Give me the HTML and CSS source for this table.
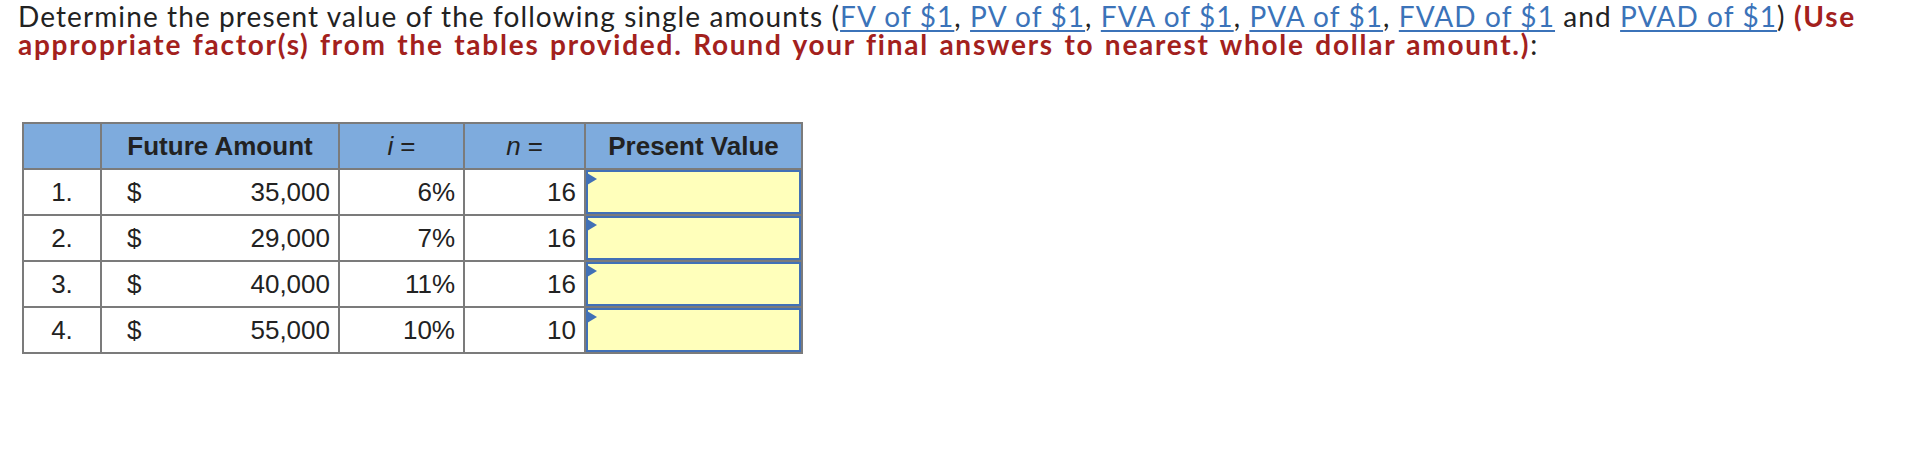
FILE: index.html
```html
<!DOCTYPE html>
<html lang="en">
<head>
<meta charset="utf-8">
<title>Present value</title>
<link rel="stylesheet" href="styles.css">
</head>
<body>
<div class="page">
  <p class="prompt">Determine the present value of the following single amounts (<a href="#">FV of $1</a>, <a href="#">PV of $1</a>, <a href="#">FVA of $1</a>, <a href="#">PVA of $1</a>, <a href="#">FVAD of $1</a> and <a href="#">PVAD of $1</a>) <strong class="note">(Use appropriate factor(s) from the tables provided. Round your final answers to nearest whole dollar amount.)</strong>:</p>

  <div class="grid">
    <div class="cell head"></div>
    <div class="cell head">Future Amount</div>
    <div class="cell head plain"><i>i</i> =</div>
    <div class="cell head plain"><i>n</i> =</div>
    <div class="cell head">Present Value</div>

    <div class="cell num">1.</div>
    <div class="cell amt"><span>$</span><span>35,000</span></div>
    <div class="cell right">6%</div>
    <div class="cell right">16</div>
    <div class="cell entry"><div class="box"></div></div>

    <div class="cell num">2.</div>
    <div class="cell amt"><span>$</span><span>29,000</span></div>
    <div class="cell right">7%</div>
    <div class="cell right">16</div>
    <div class="cell entry"><div class="box"></div></div>

    <div class="cell num">3.</div>
    <div class="cell amt"><span>$</span><span>40,000</span></div>
    <div class="cell right">11%</div>
    <div class="cell right">16</div>
    <div class="cell entry"><div class="box"></div></div>

    <div class="cell num">4.</div>
    <div class="cell amt"><span>$</span><span>55,000</span></div>
    <div class="cell right">10%</div>
    <div class="cell right">10</div>
    <div class="cell entry"><div class="box"></div></div>
  </div>
</div>
</body>
</html>
```

FILE: styles.css
```css
html, body {
  margin: 0;
  padding: 0;
  background: #ffffff;
}

.page {
  padding: 2px 18px 0 18px;
}

.prompt {
  margin: 0;
  font-family: Lato, "Liberation Sans", sans-serif;
  font-size: 28px;
  line-height: 28px;
  letter-spacing: 1.1px;
  color: #222222;
}

.prompt a {
  color: #3b73b9;
  text-decoration: underline;
  text-underline-offset: 3px;
  text-decoration-thickness: 2px;
}

.note {
  color: #a3211d;
  font-weight: 700;
  letter-spacing: 1.75px;
  word-spacing: 2px;
}

.grid {
  display: grid;
  grid-template-columns: 78px 238px 125px 121px 217px;
  grid-auto-rows: 46px;
  width: max-content;
  margin: 64px 0 0 4px;
  border-left: 2px solid #7b7b7b;
  border-top: 2px solid #7b7b7b;
  font-family: "Liberation Sans", Arial, sans-serif;
  font-size: 26px;
  color: #222222;
}

.cell {
  border-right: 2px solid #7b7b7b;
  border-bottom: 2px solid #7b7b7b;
  display: flex;
  align-items: center;
  box-sizing: border-box;
}

.head {
  background: #7eabdd;
  font-weight: 700;
  justify-content: center;
}

.head.plain {
  font-weight: 400;
}

.head i {
  margin-right: 7px;
}

.num {
  justify-content: center;
}

.amt {
  justify-content: space-between;
  padding: 0 8px 0 25px;
}

.right {
  justify-content: flex-end;
  padding-right: 8px;
}

.entry {
  align-items: stretch;
}

.box {
  position: relative;
  flex: 1;
  background: #ffffbb;
  border: 2px solid #4170b6;
}

.box::before {
  content: "";
  position: absolute;
  left: -1px;
  top: 1px;
  width: 0;
  height: 0;
  border-top: 6px solid transparent;
  border-bottom: 6px solid transparent;
  border-left: 10px solid #4170b6;
}
```
